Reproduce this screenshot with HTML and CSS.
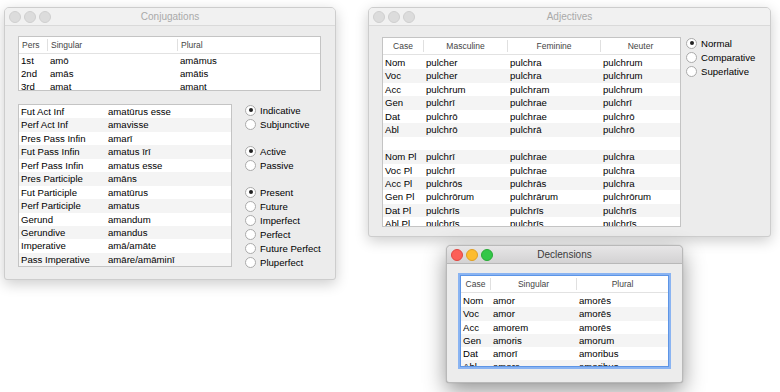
FILE: index.html
```html
<!DOCTYPE html>
<html lang="la">
<head>
  <meta charset="UTF-8">
  <title>Latin Windows</title>
  <link rel="stylesheet" href="styles.css">
</head>
<body>
<div class="desktop">

  <!-- Conjugations window -->
  <div class="window win-conj">
    <div class="titlebar">
      <div class="lights"><span></span><span></span><span></span></div>
      <div class="title">Conjugations</div>
    </div>
    <div class="conj-body">
      <div class="table conj-top">
        <div class="row head cols-pers">
          <div>Pers</div><div>Singular</div><div>Plural</div>
        </div>
        <div class="row cols-pers"><div>1st</div><div>amō</div><div>amāmus</div></div>
        <div class="row cols-pers"><div>2nd</div><div>amās</div><div>amātis</div></div>
        <div class="row cols-pers"><div>3rd</div><div>amat</div><div>amant</div></div>
      </div>

      <div class="conj-lower">
        <div class="table conj-forms">
          <div class="row cols-forms"><div>Fut Act Inf</div><div>amatūrus esse</div></div>
          <div class="row alt cols-forms"><div>Perf Act Inf</div><div>amavisse</div></div>
          <div class="row cols-forms"><div>Pres Pass Infin</div><div>amarī</div></div>
          <div class="row alt cols-forms"><div>Fut Pass Infin</div><div>amatus īrī</div></div>
          <div class="row cols-forms"><div>Perf Pass Infin</div><div>amatus esse</div></div>
          <div class="row alt cols-forms"><div>Pres Participle</div><div>amāns</div></div>
          <div class="row cols-forms"><div>Fut Participle</div><div>amatūrus</div></div>
          <div class="row alt cols-forms"><div>Perf Participle</div><div>amatus</div></div>
          <div class="row cols-forms"><div>Gerund</div><div>amandum</div></div>
          <div class="row alt cols-forms"><div>Gerundive</div><div>amandus</div></div>
          <div class="row cols-forms"><div>Imperative</div><div>amā/amāte</div></div>
          <div class="row alt cols-forms"><div>Pass Imperative</div><div>amāre/amāminī</div></div>
        </div>

        <div class="radios">
          <div class="radio-group">
            <label class="radio"><span class="dot on"></span>Indicative</label>
            <label class="radio"><span class="dot"></span>Subjunctive</label>
          </div>
          <div class="radio-group">
            <label class="radio"><span class="dot on"></span>Active</label>
            <label class="radio"><span class="dot"></span>Passive</label>
          </div>
          <div class="radio-group">
            <label class="radio"><span class="dot on"></span>Present</label>
            <label class="radio"><span class="dot"></span>Future</label>
            <label class="radio"><span class="dot"></span>Imperfect</label>
            <label class="radio"><span class="dot"></span>Perfect</label>
            <label class="radio"><span class="dot"></span>Future Perfect</label>
            <label class="radio"><span class="dot"></span>Pluperfect</label>
          </div>
        </div>
      </div>
    </div>
  </div>

  <!-- Adjectives window -->
  <div class="window win-adj">
    <div class="titlebar">
      <div class="lights"><span></span><span></span><span></span></div>
      <div class="title">Adjectives</div>
    </div>
    <div class="adj-body">
      <div class="table adj-table">
        <div class="row head centered cols-adj">
          <div>Case</div><div>Masculine</div><div>Feminine</div><div>Neuter</div>
        </div>
        <div class="row cols-adj"><div>Nom</div><div>pulcher</div><div>pulchra</div><div>pulchrum</div></div>
        <div class="row alt cols-adj"><div>Voc</div><div>pulcher</div><div>pulchra</div><div>pulchrum</div></div>
        <div class="row cols-adj"><div>Acc</div><div>pulchrum</div><div>pulchram</div><div>pulchrum</div></div>
        <div class="row alt cols-adj"><div>Gen</div><div>pulchrī</div><div>pulchrae</div><div>pulchrī</div></div>
        <div class="row cols-adj"><div>Dat</div><div>pulchrō</div><div>pulchrae</div><div>pulchrō</div></div>
        <div class="row alt cols-adj"><div>Abl</div><div>pulchrō</div><div>pulchrā</div><div>pulchrō</div></div>
        <div class="row cols-adj"><div></div><div></div><div></div><div></div></div>
        <div class="row alt cols-adj"><div>Nom Pl</div><div>pulchrī</div><div>pulchrae</div><div>pulchra</div></div>
        <div class="row cols-adj"><div>Voc Pl</div><div>pulchrī</div><div>pulchrae</div><div>pulchra</div></div>
        <div class="row alt cols-adj"><div>Acc Pl</div><div>pulchrōs</div><div>pulchrās</div><div>pulchra</div></div>
        <div class="row cols-adj"><div>Gen Pl</div><div>pulchrōrum</div><div>pulchrārum</div><div>pulchrōrum</div></div>
        <div class="row alt cols-adj"><div>Dat Pl</div><div>pulchrīs</div><div>pulchrīs</div><div>pulchrīs</div></div>
        <div class="row cols-adj"><div>Abl Pl</div><div>pulchrīs</div><div>pulchrīs</div><div>pulchrīs</div></div>
      </div>
      <div class="radios adj-radios">
        <label class="radio"><span class="dot on"></span>Normal</label>
        <label class="radio"><span class="dot"></span>Comparative</label>
        <label class="radio"><span class="dot"></span>Superlative</label>
      </div>
    </div>
  </div>

  <!-- Declensions window (active) -->
  <div class="window win-decl active">
    <div class="titlebar">
      <div class="lights"><span class="red"></span><span class="yellow"></span><span class="green"></span></div>
      <div class="title">Declensions</div>
    </div>
    <div class="decl-body">
      <div class="table decl-table">
        <div class="row head centered cols-decl">
          <div>Case</div><div>Singular</div><div>Plural</div>
        </div>
        <div class="row cols-decl"><div>Nom</div><div>amor</div><div>amorēs</div></div>
        <div class="row alt cols-decl"><div>Voc</div><div>amor</div><div>amorēs</div></div>
        <div class="row cols-decl"><div>Acc</div><div>amorem</div><div>amorēs</div></div>
        <div class="row alt cols-decl"><div>Gen</div><div>amoris</div><div>amorum</div></div>
        <div class="row cols-decl"><div>Dat</div><div>amorī</div><div>amoribus</div></div>
        <div class="row alt cols-decl"><div>Abl</div><div>amore</div><div>amoribus</div></div>
      </div>
    </div>
  </div>

</div>
</body>
</html>
```

FILE: styles.css
```css
body {
  margin: 0;
  background: #fff;
  font-family: 'Liberation Sans', Arial, sans-serif;
  font-size: 9.6px;
  color: #000;
}
.desktop {
  position: relative;
  width: 780px;
  height: 392px;
  overflow: hidden;
}

/* windows */
.window {
  position: absolute;
  box-sizing: border-box;
  background: #ececec;
  border: 1px solid #cdcdcd;
  border-radius: 5px 5px 3px 3px;
  box-shadow: 0 4px 14px rgba(0, 0, 0, 0.2);
  overflow: hidden;
}
.win-conj { left: 4px; top: 7px; width: 332px; height: 273px; }
.win-adj { left: 368px; top: 7px; width: 403px; height: 230px; }
.win-decl {
  left: 446px; top: 245px; width: 237px; height: 138px;
  border-color: #b9b9b9;
  box-shadow: 0 8px 22px rgba(0, 0, 0, 0.42), 0 0 1px rgba(0, 0, 0, 0.3);
}

.titlebar {
  display: grid;
  grid-template-columns: 1fr auto 1fr;
  align-items: center;
  height: 18px;
  background: #f1f1f1;
  border-bottom: 1px solid #dadada;
  box-sizing: border-box;
}
.active .titlebar {
  background: linear-gradient(#e7e6e7, #d3d2d3);
  border-bottom-color: #b8b8b8;
}
.title {
  font-size: 10px;
  color: #a9a9a9;
}
.active .title { color: #3a3a3a; }

.lights {
  display: flex;
  gap: 3px;
  padding-left: 4px;
}
.lights span {
  width: 10px;
  height: 10px;
  border-radius: 50%;
  background: #dcdcdc;
  border: 0.5px solid #cfcfcf;
}
.lights .red { background: #fc5f57; border-color: #df4640; }
.lights .yellow { background: #fdbc2e; border-color: #de9f23; }
.lights .green { background: #33c748; border-color: #27aa35; }

/* tables */
.table {
  background: #fff;
  border: 1px solid #c4c4c4;
  box-sizing: border-box;
  overflow: hidden;
}
.row {
  display: grid;
  height: 13.45px;
  line-height: 13.45px;
  white-space: nowrap;
}
.row > div {
  padding-left: 2px;
  overflow: hidden;
}
.row.alt { background: #f4f4f4; }
.row.head {
  height: 16px;
  line-height: 16px;
  font-size: 8.5px;
  color: #444;
  border-bottom: 1px solid #e2e2e2;
  margin-bottom: 1px;
}
.row.head > div {
  padding-left: 3px;
  border-right: 1px solid #e0e0e0;
  margin: 2px 0;
  line-height: 12px;
}
.row.head > div:last-child { border-right: none; }
.row.centered > div {
  text-align: center;
  padding-left: 0;
}

.cols-pers { grid-template-columns: 29px 130px 1fr; }
.cols-pers > div { padding-left: 2px; }
.cols-forms { grid-template-columns: 87px 1fr; }
.cols-adj { grid-template-columns: 41px 84px 93px 1fr; }
.cols-decl { grid-template-columns: 30px 86px 1fr; }

/* conjugations */
.conj-body { padding: 10px 13px 0; }
.conj-top {
  width: 303px;
  height: 55px;
}
.conj-top .row { height: 12.8px; line-height: 12.8px; }
.conj-top .row.head { height: 16px; line-height: 16px; margin-bottom: 1px; }
.conj-lower {
  display: flex;
  align-items: flex-start;
  margin-top: 13px;
}
.conj-forms {
  width: 214px;
  height: 163px;
}

/* radio buttons */
.radios {
  display: flex;
  flex-direction: column;
  gap: 13px;
  margin-left: 13px;
  margin-top: -1px;
}
.radio-group {
  display: flex;
  flex-direction: column;
}
.radio {
  display: flex;
  align-items: center;
  gap: 4px;
  height: 14px;
  color: #000;
}
.dot {
  width: 11px;
  height: 11px;
  border-radius: 50%;
  background: #fff;
  border: 1px solid #aaa;
  box-sizing: border-box;
  display: flex;
  align-items: center;
  justify-content: center;
}
.dot.on::after {
  content: "";
  width: 4px;
  height: 4px;
  border-radius: 50%;
  background: #222;
}

/* adjectives */
.adj-body {
  display: flex;
  align-items: flex-start;
  padding: 11px 13px 0;
}
.adj-table {
  width: 299px;
  height: 190px;
}
.adj-radios {
  gap: 0;
  margin-left: 5px;
  margin-top: -1px;
}

/* declensions */
.decl-body { padding: 11px 13px 0; }
.decl-table {
  width: 209px;
  height: 92px;
  border: 1px solid #5d95e6;
  box-shadow: 0 0 0 2px #8ab4f2;
}
.decl-table .row { height: 13.3px; line-height: 13.3px; }
.decl-table .row.head { height: 16px; line-height: 16px; }
```
